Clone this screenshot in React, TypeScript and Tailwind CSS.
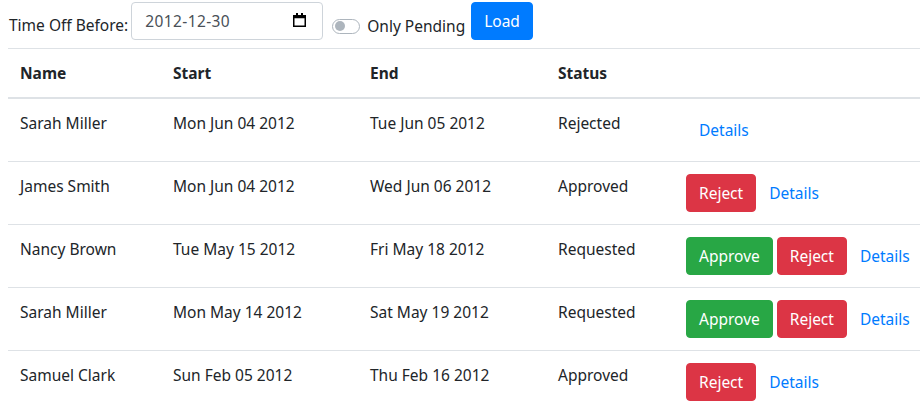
import { useState } from 'react'

type Request = {
  name: string
  start: string
  end: string
  status: 'Rejected' | 'Approved' | 'Requested'
}

const requests: Request[] = [
  { name: 'Sarah Miller', start: 'Mon Jun 04 2012', end: 'Tue Jun 05 2012', status: 'Rejected' },
  { name: 'James Smith', start: 'Mon Jun 04 2012', end: 'Wed Jun 06 2012', status: 'Approved' },
  { name: 'Nancy Brown', start: 'Tue May 15 2012', end: 'Fri May 18 2012', status: 'Requested' },
  { name: 'Sarah Miller', start: 'Mon May 14 2012', end: 'Sat May 19 2012', status: 'Requested' },
  { name: 'Samuel Clark', start: 'Sun Feb 05 2012', end: 'Thu Feb 16 2012', status: 'Approved' },
]

function CalendarIcon() {
  return (
    <svg width="13" height="14" viewBox="0 0 13 14" className="text-black">
      <rect x="3" y="0" width="2" height="3" fill="currentColor" />
      <rect x="8" y="0" width="2" height="3" fill="currentColor" />
      <rect x="0.75" y="2.75" width="11.5" height="10.5" fill="none" stroke="currentColor" strokeWidth="1.5" />
      <rect x="0.75" y="2.75" width="11.5" height="2.5" fill="currentColor" />
    </svg>
  )
}

export default function App() {
  const [onlyPending, setOnlyPending] = useState(false)

  return (
    <div className="min-h-[409px] w-[920px] overflow-hidden bg-white text-[15.5px] leading-6 text-[#212529] font-['Segoe_UI','Noto_Sans',sans-serif]">
      {/* Filter bar */}
      <div className="flex items-start pl-2 pt-[2px] pb-[8px]">
        <span className="mt-[11px] mr-[3px] ml-[1px]">Time Off Before:</span>
        <div className="flex items-center justify-between w-[192px] h-[38px] pl-[13px] pr-[12px] border border-[#ced4da] rounded-[4px]">
          <span className="tracking-[0.4px] text-[#495057]">2012-12-30</span>
          <span className="mr-[4px] mb-[2px]"><CalendarIcon /></span>
        </div>
        <button
          onClick={() => setOnlyPending(!onlyPending)}
          className="flex items-center ml-[9px] mt-[12px]"
        >
          <span className="relative w-[28px] h-[15px] rounded-full border border-[#adb5bd] bg-white">
            <span className="absolute left-[2px] top-[1.5px] w-[10px] h-[10px] rounded-full bg-[#adb5bd]" />
          </span>
          <span className="ml-[7px]">Only Pending</span>
        </button>
        <button className="ml-[6px] h-[38px] px-[12px] rounded-[4px] bg-[#007bff] text-white border border-[#007bff]">
          Load
        </button>
      </div>

      {/* Requests table */}
      <table className="ml-2 w-[960px] border-collapse text-left">
        <thead>
          <tr className="border-t border-[#dee2e6] border-b-2">
            <th className="w-[153px] p-3 font-bold align-bottom">Name</th>
            <th className="w-[197px] p-3 font-bold align-bottom">Start</th>
            <th className="w-[188px] p-3 font-bold align-bottom">End</th>
            <th className="w-[128px] p-3 font-bold align-bottom">Status</th>
            <th className="p-3" />
          </tr>
        </thead>
        <tbody>
          {requests.map((r, i) => (
            <tr key={i} className="border-t border-[#dee2e6]">
              <td className="p-3 align-top">{r.name}</td>
              <td className="p-3 align-top">{r.start}</td>
              <td className="p-3 align-top">{r.end}</td>
              <td className="p-3 align-top">{r.status}</td>
              <td className="p-3 align-top">
                <div className="flex">
                  {r.status === 'Requested' && (
                    <button className="mr-1 h-[38px] px-[12px] rounded-[4px] bg-[#28a745] border border-[#28a745] text-white">
                      Approve
                    </button>
                  )}
                  {r.status !== 'Rejected' && (
                    <button className="h-[38px] px-[12px] rounded-[4px] bg-[#dc3545] border border-[#dc3545] text-white">
                      Reject
                    </button>
                  )}
                  <button className="h-[38px] px-[12px] border border-transparent text-[#007bff]">
                    Details
                  </button>
                </div>
              </td>
            </tr>
          ))}
        </tbody>
      </table>
    </div>
  )
}
